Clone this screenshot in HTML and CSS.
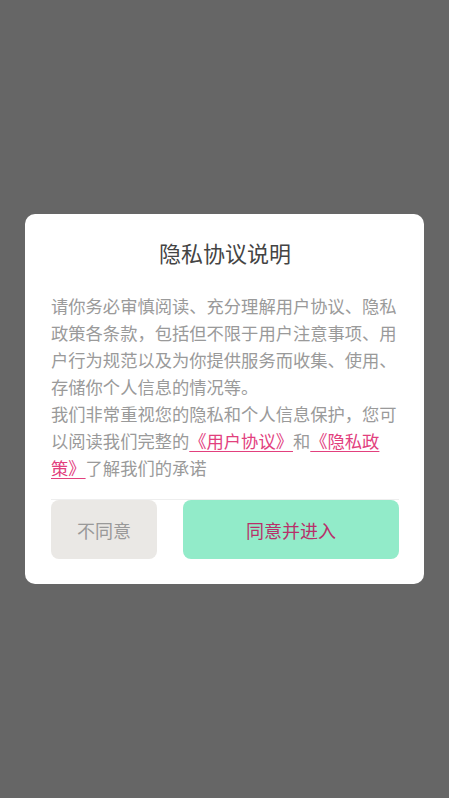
FILE: index.html
```html
<!DOCTYPE html>
<html lang="zh-CN">
<head>
<meta charset="utf-8">
<title>隐私协议说明</title>
<link rel="stylesheet" href="styles.css">
</head>
<body>
<div class="overlay">
  <div class="dialog">
    <h1 class="title">隐私协议说明</h1>
    <div class="content">
      <p>请你务必审慎阅读、充分理解用户协议、隐私政策各条款，包括但不限于用户注意事项、用户行为规范以及为你提供服务而收集、使用、存储你个人信息的情况等。</p>
      <p>我们非常重视您的隐私和个人信息保护，您可以阅读我们完整的<a class="link" href="#">《用户协议》</a>和<a class="link" href="#">《隐私政策》</a>了解我们的承诺</p>
    </div>
    <div class="actions">
      <button class="btn btn-cancel">不同意</button>
      <button class="btn btn-ok">同意并进入</button>
    </div>
  </div>
</div>
</body>
</html>
```
FILE: styles.css
```css
* { box-sizing: border-box; }
html, body { margin: 0; padding: 0; height: 100%; }
body {
  background: #666666;
  font-family: "Noto Sans CJK SC", "Noto Sans", sans-serif;
}
.overlay {
  height: 100%;
  display: flex;
  align-items: center;
  justify-content: center;
  padding: 0 25px;
}
.dialog {
  width: 399px;
  background: #ffffff;
  border-radius: 10px;
  padding: 23px 25px 25px 26px;
}
.title {
  margin: 0;
  font-size: 22px;
  font-weight: 400;
  line-height: 30px;
  color: #444444;
  text-align: center;
}
.content {
  margin-top: 25px;
  font-size: 17.3px;
  line-height: 27px;
  color: #9a9a9a;
}
.content p { margin: 0; }
.link {
  color: #e2407e;
  text-decoration: underline;
  text-underline-offset: 3px;
  text-decoration-thickness: 1px;
}
.actions {
  margin-top: 18px;
  border-top: 1px solid #eeeeee;
  display: flex;
  gap: 26px;
}
.btn {
  height: 59px;
  border: none;
  border-radius: 8px;
  font-family: inherit;
  font-size: 18px;
  cursor: pointer;
}
.btn-cancel {
  flex: 0 0 106px;
  background: #eae8e5;
  color: #999999;
}
.btn-ok {
  flex: 1;
  background: #92ebc9;
  color: #b8306a;
}
```
